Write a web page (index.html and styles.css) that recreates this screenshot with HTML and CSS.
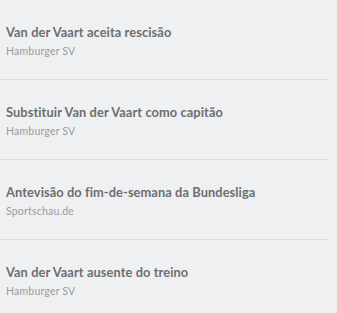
FILE: index.html
```html
<!DOCTYPE html>
<html>
<head>
<meta charset="utf-8">
<link rel="stylesheet" href="styles.css">
</head>
<body>
<ul class="list">
  <li class="item"><div class="title">Van der Vaart aceita rescisão</div><div class="source">Hamburger SV</div></li>
  <li class="item"><div class="title">Substituir Van der Vaart como capitão</div><div class="source">Hamburger SV</div></li>
  <li class="item"><div class="title">Antevisão do fim-de-semana da Bundesliga</div><div class="source">Sportschau.de</div></li>
  <li class="item"><div class="title">Van der Vaart ausente do treino</div><div class="source">Hamburger SV</div></li>
</ul>
</body>
</html>
```
FILE: styles.css
```css
html, body { margin: 0; padding: 0; background: #eff0f1; }
body { width: 337px; height: 313px; overflow: hidden; font-family: Lato, "Liberation Sans", sans-serif; }
.list { list-style: none; margin: 0; padding: 0; width: 329px; }
.item { height: 79px; border-bottom: 1px solid #dcdddf; padding: 0 6px; display: flex; flex-direction: column; }
.title { margin-top: 25px; font-size: 12.8px; font-weight: 700; color: #6d6e70; line-height: 15px; letter-spacing: 0.1px; }
.source { margin-top: 5px; font-size: 10.5px; color: #9a9b9d; line-height: 12px; letter-spacing: 0.2px; }
```
